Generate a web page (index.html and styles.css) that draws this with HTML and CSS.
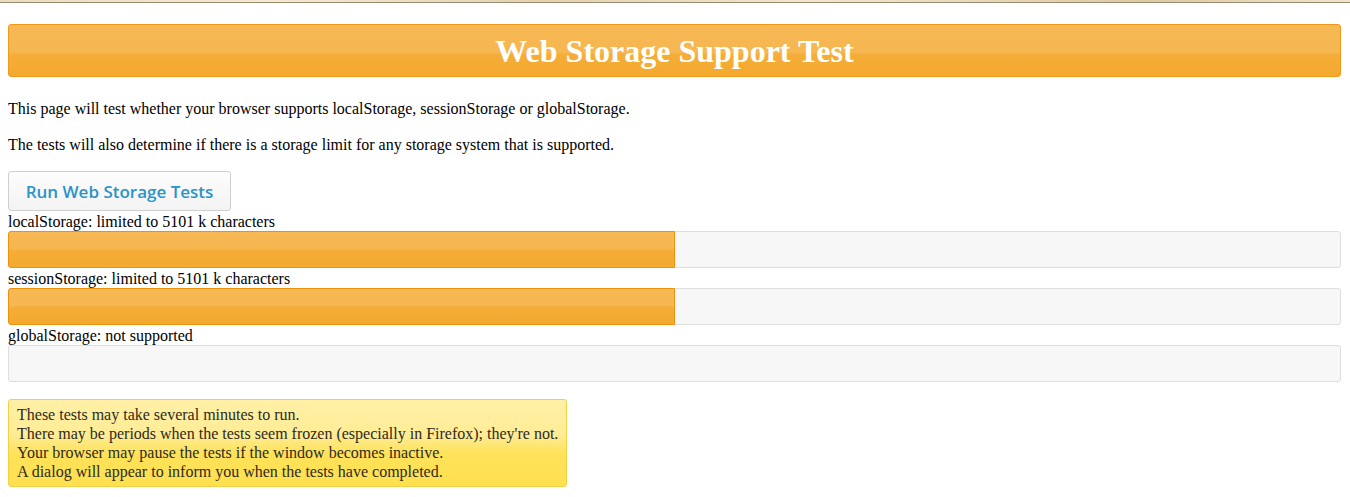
FILE: index.html
```html
<!DOCTYPE html>
<html>
<head>
<meta charset="utf-8">
<title>Web Storage Support Test</title>
<link rel="stylesheet" href="styles.css">
</head>
<body>
<div class="topstrip"></div>
<div class="page">
  <h1 class="header">Web Storage Support Test</h1>
  <p class="intro first">This page will test whether your browser supports localStorage, sessionStorage or globalStorage.</p>
  <p class="intro second">The tests will also determine if there is a storage limit for any storage system that is supported.</p>
  <button class="run-btn">Run Web Storage Tests</button>
  <div class="result">
    <div class="label">localStorage: limited to 5101 k characters</div>
    <div class="bar"><div class="fill" style="width:50.1%"></div></div>
  </div>
  <div class="result">
    <div class="label">sessionStorage: limited to 5101 k characters</div>
    <div class="bar"><div class="fill" style="width:50.1%"></div></div>
  </div>
  <div class="result">
    <div class="label">globalStorage: not supported</div>
    <div class="bar"></div>
  </div>
  <div class="notice">
    These tests may take several minutes to run.<br>
    There may be periods when the tests seem frozen (especially in Firefox); they're not.<br>
    Your browser may pause the tests if the window becomes inactive.<br>
    A dialog will appear to inform you when the tests have completed.
  </div>
</div>
</body>
</html>
```
FILE: styles.css
```css
html, body {
  margin: 0;
  padding: 0;
  background: #fff;
}
body {
  font-family: "Liberation Serif", "Times New Roman", serif;
  font-size: 16px;
  color: #000;
}
.topstrip {
  height: 2px;
  background: linear-gradient(90deg, #e9dcc0, #f3ead6 20%, #e2d2b0 40%, #f1e6cf 60%, #dccaa4 85%, #efe4cc);
  border-bottom: 1px solid #9a8a70;
}
.page {
  padding: 0 9px 0 8px;
}
.header {
  margin: 21px 0 0 0;
  height: 51px;
  line-height: 52px;
  border: 1px solid #ef9a1c;
  border-radius: 3px;
  background: linear-gradient(#f7b955 0%, #f6b650 54%, #f5ad38 58%, #f4a92f 100%);
  color: #fff;
  text-align: center;
  font-family: "Liberation Serif", "Times New Roman", serif;
  font-size: 32px;
  font-weight: bold;
}
.intro {
  margin: 0;
  line-height: 18px;
}
.intro.first {
  margin-top: 23px;
}
.intro.second {
  margin-top: 18px;
}
.run-btn {
  display: block;
  margin-top: 17px;
  width: 223px;
  height: 40px;
  border: 1px solid #cfcfcf;
  border-radius: 3px;
  background: linear-gradient(#fdfdfd, #f3f3f3);
  color: #2a93c8;
  font-family: "Open Sans", "DejaVu Sans", sans-serif;
  font-weight: 600;
  font-size: 17px;
  padding: 1px 0 0 0;
  cursor: pointer;
}
.label {
  line-height: 20px;
  height: 20px;
  padding-top: 1px;
  box-sizing: border-box;
}
.bar {
  height: 35px;
  border: 1px solid #dedede;
  border-radius: 3px;
  background: #f7f7f7;
}
.fill {
  box-sizing: border-box;
  height: calc(100% + 2px);
  margin: -1px 0 0 -1px;
  border: 1px solid #ec920c;
  border-radius: 3px 0 0 3px;
  background: linear-gradient(#f7b955 0%, #f6b650 48%, #f5ad38 52%, #f4a92f 100%);
}
.notice {
  margin-top: 17px;
  width: max-content;
  padding: 5px 8px 5px 8px;
  border: 1px solid #f5cf45;
  border-radius: 3px;
  background: linear-gradient(#fff0a6 0%, #ffec96 40%, #ffe25a 62%, #ffe04e 100%);
  color: #2e2a20;
  line-height: 19px;
}
```
